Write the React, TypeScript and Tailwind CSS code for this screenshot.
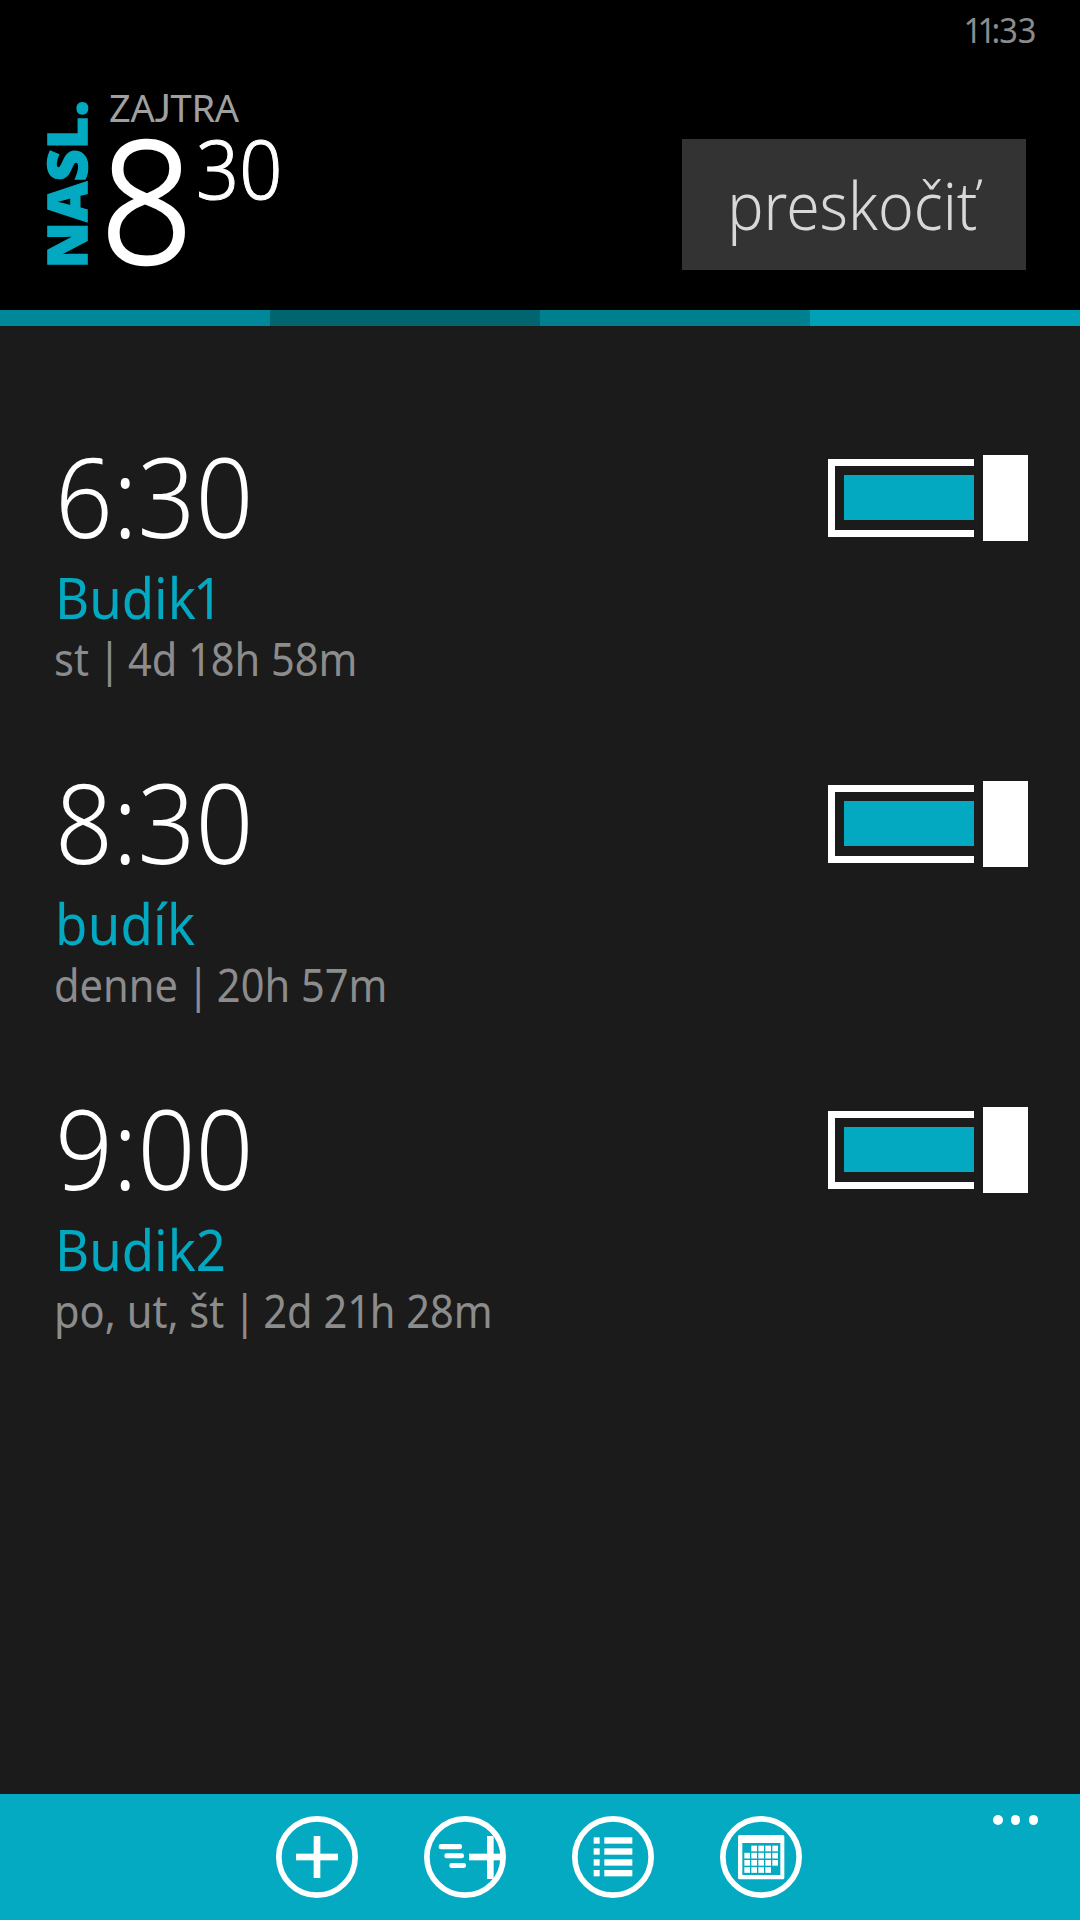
import type { ReactNode } from "react";

function One() {
  return <span className="tracking-[-0.03em]">1</span>;
}

function Bar() {
  return <span className="-ml-[2px] -mr-[4px]">|</span>;
}

type Alarm = { time: string; name: ReactNode; detail: ReactNode };

const alarms: Alarm[] = [
  {
    time: "6:30",
    name: <>Budik<span className="-ml-[3px]">1</span></>,
    detail: <>st <Bar /> 4d <One />8h 58m</>,
  },
  { time: "8:30", name: <span className="tracking-[0.3px]">budík</span>, detail: <>denne <Bar /> 20h 57m</> },
  {
    time: "9:00",
    name: "Budik2",
    detail: <>po, ut, št <Bar /> 2d 2<One />h 28m</>,
  },
];

function Toggle() {
  return (
    <button className="mt-5 flex h-[86px] w-[200px] items-center justify-between" aria-label="toggle alarm">
      <span className="flex h-[78px] w-[146px] items-center border-y-[7px] border-l-[7px] border-white pl-[9px]">
        <span className="h-[45px] w-full bg-[#02a9c0]" />
      </span>
      <span className="h-full w-[45px] bg-white" />
    </button>
  );
}

function AlarmRow({ time, name, detail }: Alarm) {
  return (
    <li className="flex h-[326px] items-start justify-between pr-[52px] pl-[54px]">
      <div className="whitespace-nowrap">
        <div className="ml-px origin-left scale-x-[0.913] text-[111px] leading-[121px] font-light text-white">{time}</div>
        <div className="mt-[6px] ml-px origin-left scale-x-[0.94] text-[56px] leading-[70px] text-[#02a9c0]">{name}</div>
        <div className="-mt-px origin-left scale-x-[0.924] text-[45px] leading-[55px] text-[#8c8c8c]">{detail}</div>
      </div>
      <Toggle />
    </li>
  );
}

function IconButton({ label, children }: { label: string; children: ReactNode }) {
  return (
    <button aria-label={label} className="size-[84px]">
      <svg viewBox="-126 -126 252 252" className="size-full" fill="#fff">
        <circle r="114.5" fill="none" stroke="#fff" strokeWidth="17" />
        {children}
      </svg>
    </button>
  );
}

const listRows = [-59, -26, 7, 39];
const cells = [0, 1, 2, 3].flatMap((r) =>
  [0, 1, 2, 3, 4]
    .filter((c) => !(r === 0 && c === 0) && !(r === 3 && c === 4))
    .map((c) => ({ x: -50 + c * 21, y: -34 + r * 21.5 })),
);

export default function App() {
  return (
    <div className="flex h-[1920px] w-[1080px] flex-col overflow-hidden bg-[#1b1b1b] font-['Noto_Sans','Open_Sans',sans-serif]">
      <header className="flex h-[310px] flex-col bg-black">
        <div className="flex h-[58px] justify-end pr-[44px] text-[35px] leading-[60px] text-[#8c8c8c]">
          <span className="origin-right scale-x-[0.93]">
            <span className="tracking-[-5px]">11</span>
            <span className="tracking-[-1px]">:</span>33
          </span>
        </div>
        <div className="flex items-end justify-between pt-[29px] pr-[54px]">
          <div className="flex items-end">
            <div className="mb-[3px] ml-[45px] flex h-[164px] w-[42px] items-center justify-center text-[55px] leading-[42px] font-black text-[#02a9c0]">
              <span className="-rotate-90 tracking-[0.6px] whitespace-nowrap [-webkit-text-stroke:1.6px_#02a9c0]">NASL.</span>
            </div>
            <div className="ml-[13px]">
              <div className="ml-[9px] text-[38px] leading-[40px] tracking-[-0.2px] text-[#a0a0a0]">
                ZA<span className="font-['Lato']">J</span>TRA
              </div>
              <div className="mb-[2px] flex items-start text-white">
                <span className="w-[96px] origin-left scale-x-[0.96] text-[170px] leading-[140px] font-light [-webkit-text-stroke:2.5px_white]">8</span>
                <span className="origin-left scale-x-[0.933] text-[81px] leading-[81px] font-light [-webkit-text-stroke:1px_white]">30</span>
              </div>
            </div>
          </div>
          <button className="mb-[-1px] flex h-[131px] w-[344px] items-center justify-center bg-[#333] pr-[4px] text-[67px] font-light text-[#d8d8d8]">
            <span className="scale-x-[0.905]">preskočiť</span>
          </button>
        </div>
      </header>

      <div className="grid h-4 grid-cols-4">
        <div className="bg-[#00879a]" />
        <div className="bg-[#00656f]" />
        <div className="bg-[#007f8f]" />
        <div className="bg-[#00a0b6]" />
      </div>

      <ul className="flex-1 pt-[108.5px]">
        {alarms.map((a) => (
          <AlarmRow key={a.time} {...a} />
        ))}
      </ul>

      <nav className="flex h-[126px] items-start bg-[#04aac1] pt-[21px] pl-[275px]">
        <div className="flex gap-16">
          <IconButton label="add">
            <rect x="-63" y="-10" width="126" height="20" />
            <rect x="-10" y="-63" width="20" height="126" />
          </IconButton>
          <IconButton label="quick add">
            <rect x="-79" y="-39" width="70" height="16" rx="7" />
            <rect x="-62" y="-11" width="59" height="15" rx="7" />
            <rect x="-47" y="18" width="50" height="15" rx="7" />
            <rect x="12" y="-10" width="100" height="20" />
            <rect x="66" y="-63" width="20" height="129" />
          </IconButton>
          <IconButton label="list">
            {listRows.map((y) => (
              <g key={y}>
                <rect x="-58" y={y} width="18" height="19" />
                <rect x="-26" y={y} width="84" height="19" />
              </g>
            ))}
          </IconButton>
          <IconButton label="calendar">
            <rect x="-69" y="-66" width="139" height="133" rx="5" />
            <rect x="-56" y="-42" width="114" height="96" fill="#04aac1" />
            {cells.map(({ x, y }) => (
              <rect key={`${x},${y}`} x={x} y={y} width="17" height="17" />
            ))}
          </IconButton>
        </div>
        <button aria-label="more" className="ml-[190px] flex gap-[8.4px]">
          <span className="size-[9.5px] rounded-full bg-white" />
          <span className="size-[9.5px] rounded-full bg-white" />
          <span className="size-[9.5px] rounded-full bg-white" />
        </button>
      </nav>
    </div>
  );
}
